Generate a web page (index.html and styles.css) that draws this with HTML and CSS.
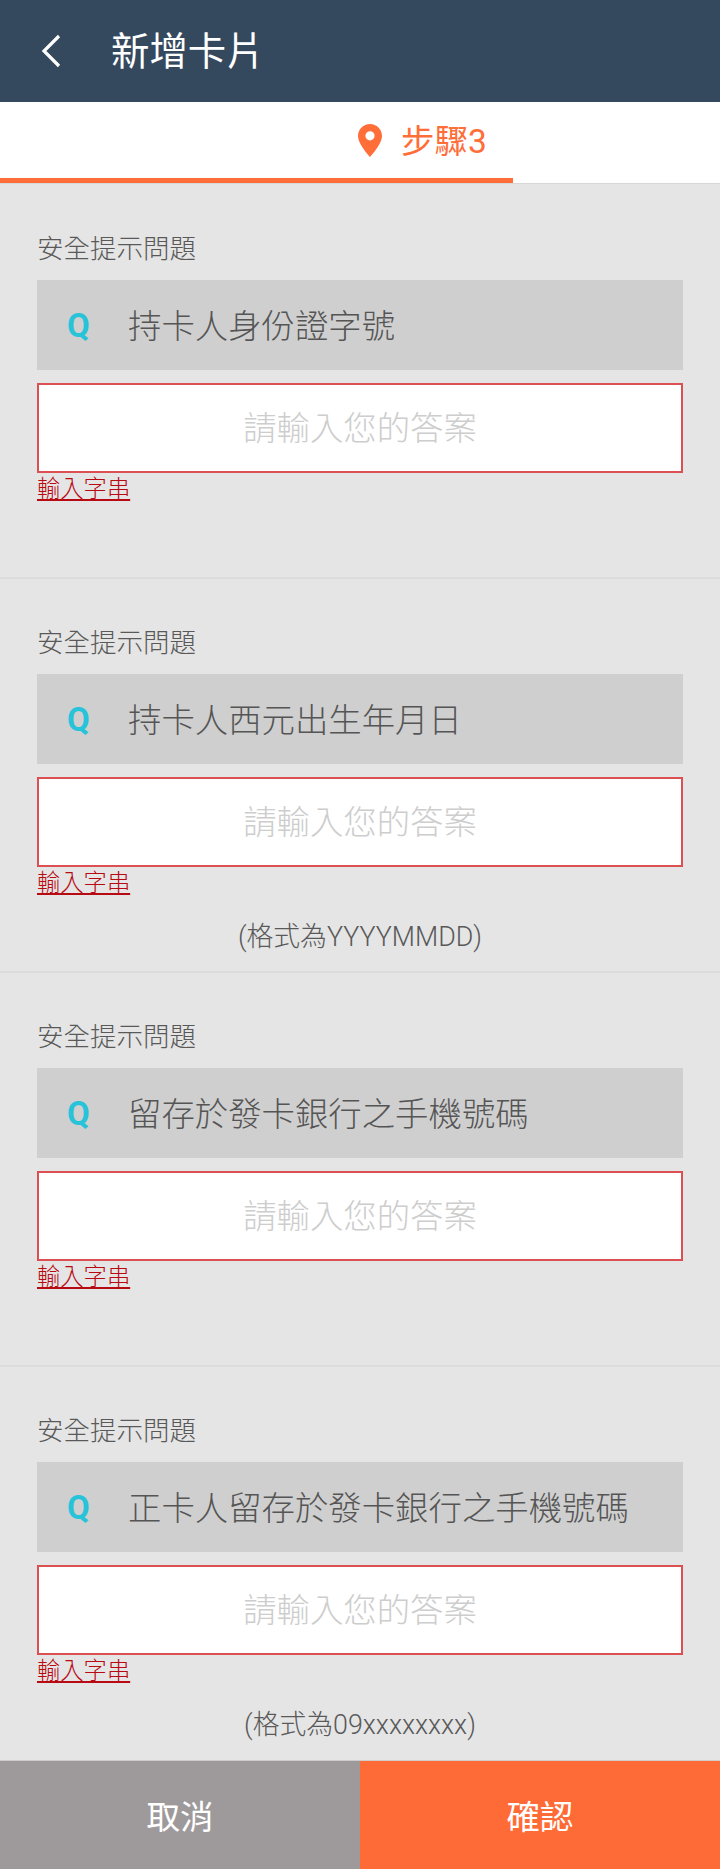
FILE: index.html
```html
<!DOCTYPE html>
<html lang="zh-Hant">
<head>
<meta charset="utf-8">
<title>新增卡片</title>
<link rel="stylesheet" href="styles.css">
</head>
<body>
<div class="app">
  <header class="topbar">
    <svg class="back" viewBox="0 0 20 34" width="20" height="34"><polyline points="18,2 3,17 18,32"/></svg>
    <h1 class="title">新增卡片</h1>
  </header>
  <nav class="steps">
    <div class="step">
      <svg class="pin" viewBox="0 0 24 33" width="24" height="33"><path fill-rule="evenodd" d="M12 0C5.4 0 0 5.2 0 11.8 0 20.5 12 33 12 33s12-12.5 12-21.2C24 5.2 18.6 0 12 0zm0 7.2a4.6 4.6 0 1 1 0 9.2 4.6 4.6 0 0 1 0-9.2z"/></svg>
      <span class="step-text">步驟3</span>
    </div>
    <div class="progress"></div>
  </nav>
  <main class="content">
    <section class="qa">
      <div class="label">安全提示問題</div>
      <div class="question"><span class="q">Q</span><span class="qtext">持卡人身份證字號</span></div>
      <input class="answer" type="text" placeholder="請輸入您的答案">
      <a class="error">輸入字串</a>
    </section>
    <section class="qa">
      <div class="label">安全提示問題</div>
      <div class="question"><span class="q">Q</span><span class="qtext">持卡人西元出生年月日</span></div>
      <input class="answer" type="text" placeholder="請輸入您的答案">
      <a class="error">輸入字串</a>
      <div class="hint">(格式為YYYYMMDD)</div>
    </section>
    <section class="qa">
      <div class="label">安全提示問題</div>
      <div class="question"><span class="q">Q</span><span class="qtext">留存於發卡銀行之手機號碼</span></div>
      <input class="answer" type="text" placeholder="請輸入您的答案">
      <a class="error">輸入字串</a>
    </section>
    <section class="qa last">
      <div class="label">安全提示問題</div>
      <div class="question"><span class="q">Q</span><span class="qtext">正卡人留存於發卡銀行之手機號碼</span></div>
      <input class="answer" type="text" placeholder="請輸入您的答案">
      <a class="error">輸入字串</a>
      <div class="hint">(格式為09xxxxxxxx)</div>
    </section>
  </main>
  <footer class="actions">
    <button class="btn cancel" type="button">取消</button>
    <button class="btn confirm" type="button">確認</button>
  </footer>
</div>
</body>
</html>
```
FILE: styles.css
```css
* { box-sizing: border-box; }
html, body { margin: 0; padding: 0; }
body { font-family: "Roboto", "Noto Sans CJK TC", sans-serif; background: #e5e5e5; font-weight: 300; }
.app { width: 720px; height: 1869px; display: flex; flex-direction: column; overflow: hidden; }
.topbar { height: 102px; background: #34495e; display: flex; align-items: center; padding-left: 41px; flex: none; }
.back { fill: none; stroke: #fff; stroke-width: 3.2; margin-right: 50px; }
.title { margin: 2px 0 0; font-size: 38.4px; font-weight: 400; color: #fff; line-height: 48px; }
.steps { height: 82px; background: #fff; flex: none; display: flex; flex-direction: column; border-bottom: 1px solid #d8d8d8; }
.step { height: 76px; display: flex; align-items: center; gap: 19px; padding-left: 358px; color: #ff6d38; font-size: 33.5px; font-weight: 400; line-height: 40px; flex: none; }
.step-text { margin-top: 4px; }
.pin { fill: #ff6d38; flex: none; }
.progress { width: 513px; height: 5px; background: #ff6d38; }
.content { flex: 1; overflow: hidden; padding-top: 1px; }
.qa { height: 394px; padding: 46px 37px 0; border-bottom: 2px solid #dcdcdc; display: flex; flex-direction: column; align-items: stretch; }
.qa.last { border-bottom: 0; }
.label { font-size: 26.5px; line-height: 36px; color: #595959; margin-bottom: 13px; }
.question { height: 90px; background: #cfcfcf; display: flex; align-items: center; color: #555; font-size: 33.4px; flex: none; }
.q { width: 91px; padding-left: 30px; font-weight: 700; font-size: 33px; color: #26c3d9; flex: none; }
.qtext { margin-bottom: 4px; }
.answer { display: block; width: 100%; height: 90px; margin-top: 13px; border: 2px solid #dc5054; background: #fff; text-align: center; font: inherit; font-size: 33.4px; outline: 0; padding: 0; border-radius: 0; flex: none; }
.answer::placeholder { color: #cdcdcd; opacity: 1; }
.error { align-self: flex-start; font-size: 23.3px; font-weight: 300; line-height: 28px; margin-top: 2px; color: #b80a12; text-decoration: underline; }
.hint { margin-top: 22px; text-align: center; font-size: 26.8px; line-height: 36px; color: #595959; }
.actions { height: 109px; flex: none; display: flex; border-top: 1px solid #d0cccc; }
.btn { flex: 1; border: 0; margin: 0; padding: 0 0 2px; font: inherit; font-weight: 400; font-size: 33.5px; color: #fff; }
.cancel { background: #9e9a9b; }
.confirm { background: #ff6b36; }
```
